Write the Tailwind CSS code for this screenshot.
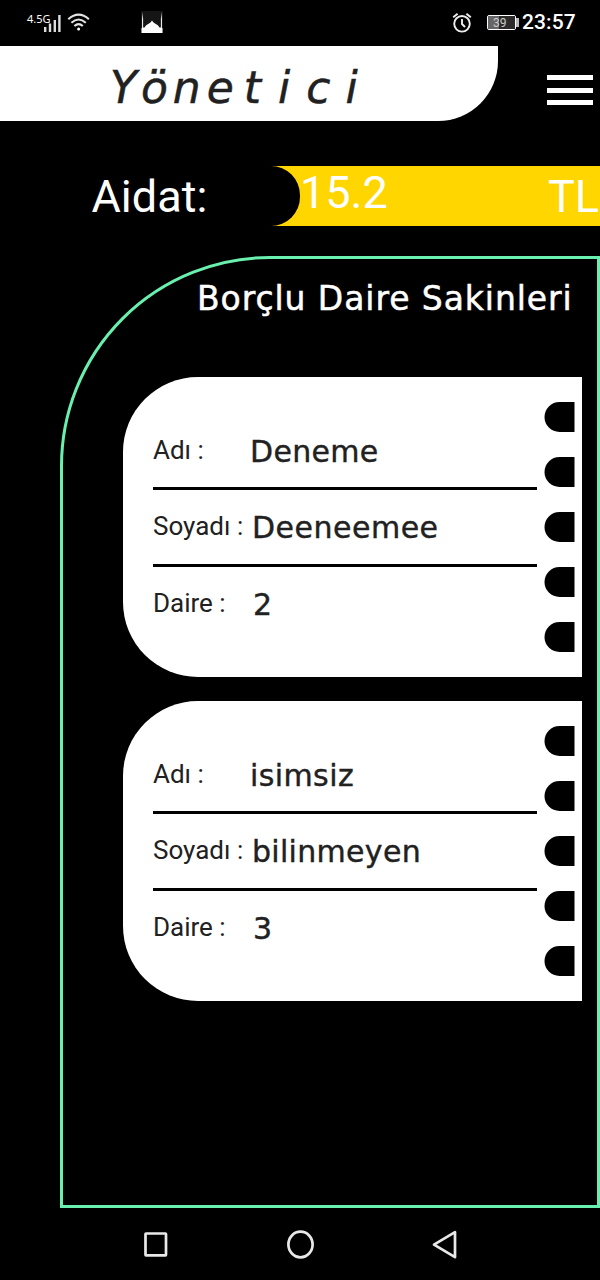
<!DOCTYPE html>
<html lang="tr">
<head>
<meta charset="utf-8">
<meta name="viewport" content="width=device-width, initial-scale=1">
<title>Yönetici</title>
<script src="https://cdn.jsdelivr.net/npm/@tailwindcss/browser@4"></script>
</head>
<body class="w-[600px] h-[1280px] overflow-hidden bg-black text-white font-['Roboto',sans-serif] flex flex-col">
  <div class="h-[46px] shrink-0 flex items-start">
    <span class="ml-[27px] mt-[12px] w-[24px] text-[11px] leading-[13px] font-normal font-['Noto_Sans',sans-serif] whitespace-nowrap">4.5G</span>
    <svg class="-ml-[7px] mt-[14px]" width="18" height="19" fill="#ddd"><rect x="0" y="13" width="2.4" height="5"/><rect x="4.8" y="9.5" width="2.4" height="8.500"/><rect x="9.6" y="6" width="2.4" height="12"/><rect x="14.2" y="1" width="2.4" height="17"/></svg>
    <svg class="ml-[5px] mt-[13px]" width="24" height="20" fill="none" stroke="#e5e5e5" stroke-width="2.1"><path d="M1.3 6.2Q11.6-2.8 21.9 6.2M4.4 9.7Q11.6 3.3 18.8 9.7M7.4 13.1Q11.6 9.2 15.8 13.1"/><circle cx="11.6" cy="15.9" r="1.5" fill="#fff" stroke="none"/></svg>
    <svg class="ml-[50px] mt-[11px]" width="22" height="22"><rect width="22" height="22" fill="#151515"/><path d="M.5 22V17H1.100V8L1.600 1L2.100 8V16.500H3.500Q4.500 14 8 12.500Q10 11.500 11 9.500Q12 11.500 14 12.500Q17.500 14 18.500 16.500H19.900V8L20.400 1L20.900 8V17H21.500V22Z" fill="#fff"/></svg>
    <svg class="ml-[289px] mt-[12px]" width="20" height="21" fill="none" stroke="#eee" stroke-width="1.9"><circle cx="10" cy="11.800" r="7.800"/><path d="M10 7V12L13 15M1.200 5.300L5.600 1.700M18.800 5.300L14.400 1.700"/></svg>
    <div class="ml-[15px] mt-[15px] flex items-center">
      <div class="w-[29px] h-[15px] border border-white rounded-[2px] bg-[#2b2b2b] flex">
        <div class="w-[27px] bg-linear-to-r from-[#666] from-[40%] to-[#2b2b2b] to-[40%] text-[12px] leading-[14px] text-[#ccc] pl-[5px]">39</div>
      </div>
      <div class="w-[3px] h-[9px] bg-[#bbb]"></div>
    </div>
    <span class="ml-[3px] mt-[9px] text-[21px] leading-[26px] font-medium tracking-[0.1px]">23:57</span>
  </div>

  <header class="h-[75px] shrink-0 flex items-start justify-between">
    <h1 class="w-[498px] h-[75px] rounded-br-[60px] bg-white text-[#212121] pl-[110px] font-['DejaVu_Sans',sans-serif] italic text-[44px] leading-[83px] whitespace-nowrap [-webkit-text-stroke:0.5px_#212121]"><span class="tracking-[4px]">Y</span><span class="tracking-[5px]">ö</span><span class="tracking-[6px]">n</span><span class="tracking-[10px]">e</span><span class="tracking-[17px]">t</span><span class="tracking-[16px]">i</span><span class="tracking-[15px]">c</span><span>i</span></h1>
    <div class="mt-[29px] mr-[7px] w-[46px] flex flex-col gap-[7.500px]">
      <div class="h-[5px] bg-white"></div><div class="h-[5px] bg-white"></div><div class="h-[5px] bg-white"></div>
    </div>
  </header>

  <section class="mt-[45px] h-[60px] shrink-0 flex text-[45px] leading-[60px]">
    <div class="w-[271px] pl-[91.500px] leading-[61px]">Aidat:</div>
    <div class="flex-1 bg-[#ffd600] flex">
      <div class="w-[29px] bg-black rounded-r-[30px]"></div>
      <div class="flex-1 leading-[53px]">15.2</div>
      <div class="w-[52px] whitespace-nowrap leading-[61px]">TL</div>
    </div>
  </section>

  <main class="mt-[30px] ml-[60px] w-[540px] h-[952px] shrink-0 border-[3px] border-[#69f0ae] rounded-tl-[210px] flex flex-col">
    <h2 class="mt-[19px] ml-[134px] h-[42px] font-['DejaVu_Sans',sans-serif] text-[33px] leading-[42px] whitespace-nowrap tracking-[0.92px] [-webkit-text-stroke:0.5px_#fff]">Borçlu Daire Sakinleri</h2>
    <div class="mt-[57px] ml-[60px] flex flex-col gap-[24px] text-[#212121]">
      <article class="w-[459px] h-[300px] bg-white rounded-l-[75px] flex">
        <div class="ml-[30px] w-[384px] pt-[36px]">
          <div class="h-[77px] border-b-[3px] border-black flex items-center"><span class="w-[97px] text-[26px]">Adı :</span><span class="mt-[3px] font-['DejaVu_Sans',sans-serif] text-[30px] tracking-[0.3px] [-webkit-text-stroke:0.4px_#212121]">Deneme</span></div>
          <div class="h-[77px] pb-[2px] border-b-[3px] border-black flex items-center"><span class="w-[99px] text-[26px]">Soyadı :</span><span class="mt-[3px] font-['DejaVu_Sans',sans-serif] text-[30px] tracking-[0.5px] [-webkit-text-stroke:0.4px_#212121]">Deeneemee</span></div>
          <div class="h-[72px] flex items-center"><span class="w-[100px] text-[26px]">Daire :</span><span class="mt-[3px] font-['DejaVu_Sans',sans-serif] text-[30px] [-webkit-text-stroke:0.4px_#212121]">2</span></div>
        </div>
        <div class="ml-[7.500px] pt-[25px] flex flex-col gap-[25px] -translate-x-[0.5px]">
          <i class="block w-[30px] h-[30px] bg-black rounded-l-[15px]"></i><i class="block w-[30px] h-[30px] bg-black rounded-l-[15px]"></i><i class="block w-[30px] h-[30px] bg-black rounded-l-[15px]"></i><i class="block w-[30px] h-[30px] bg-black rounded-l-[15px]"></i><i class="block w-[30px] h-[30px] bg-black rounded-l-[15px]"></i>
        </div>
      </article>
      <article class="w-[459px] h-[300px] bg-white rounded-l-[75px] flex">
        <div class="ml-[30px] w-[384px] pt-[36px]">
          <div class="h-[77px] border-b-[3px] border-black flex items-center"><span class="w-[97px] text-[26px]">Adı :</span><span class="mt-[3px] font-['DejaVu_Sans',sans-serif] text-[30px] tracking-[0.4px] [-webkit-text-stroke:0.4px_#212121]">isimsiz</span></div>
          <div class="h-[77px] pb-[2px] border-b-[3px] border-black flex items-center"><span class="w-[99px] text-[26px]">Soyadı :</span><span class="mt-[3px] font-['DejaVu_Sans',sans-serif] text-[30px] tracking-[0.3px] [-webkit-text-stroke:0.4px_#212121]">bilinmeyen</span></div>
          <div class="h-[72px] flex items-center"><span class="w-[100px] text-[26px]">Daire :</span><span class="mt-[3px] font-['DejaVu_Sans',sans-serif] text-[30px] [-webkit-text-stroke:0.4px_#212121]">3</span></div>
        </div>
        <div class="ml-[7.500px] pt-[25px] flex flex-col gap-[25px] -translate-x-[0.5px]">
          <i class="block w-[30px] h-[30px] bg-black rounded-l-[15px]"></i><i class="block w-[30px] h-[30px] bg-black rounded-l-[15px]"></i><i class="block w-[30px] h-[30px] bg-black rounded-l-[15px]"></i><i class="block w-[30px] h-[30px] bg-black rounded-l-[15px]"></i><i class="block w-[30px] h-[30px] bg-black rounded-l-[15px]"></i>
        </div>
      </article>
    </div>
  </main>

  <nav class="h-[72px] shrink-0 flex items-center pl-[142px]">
    <svg width="30" height="32" fill="none" stroke="#e8e8e8" stroke-width="2.7"><rect x="3.500" y="5.500" width="20.500" height="21.800" rx="0.500"/></svg>
    <svg class="ml-[112px]" width="32" height="32" fill="none" stroke="#e8e8e8" stroke-width="2.700"><ellipse cx="16.500" cy="16.500" rx="12.100" ry="12.800"/></svg>
    <svg class="ml-[112px]" width="32" height="32" fill="none" stroke="#e8e8e8" stroke-width="2.700" stroke-linejoin="round"><path d="M27 4.200V29.200L6 16.700Z"/></svg>
  </nav>
</body>
</html>
